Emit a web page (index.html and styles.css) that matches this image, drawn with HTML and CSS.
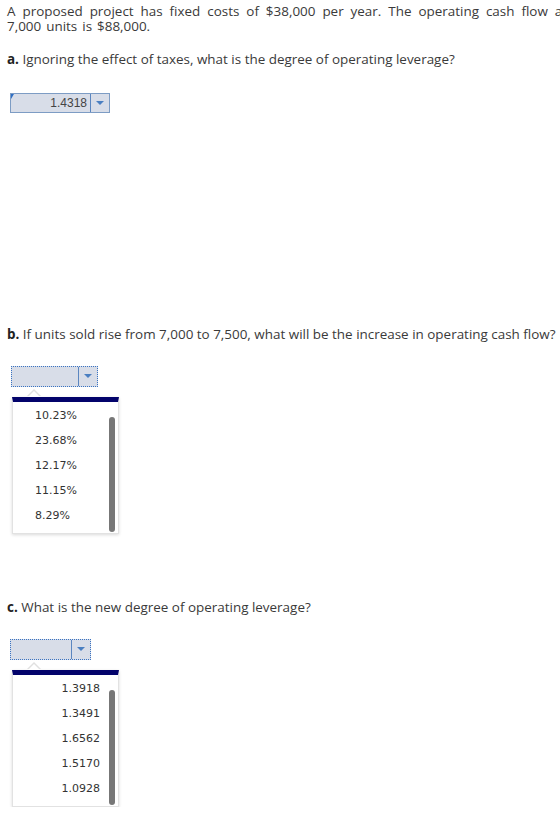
FILE: index.html
```html
<!DOCTYPE html>
<html lang="en">
<head>
    <meta charset="UTF-8">
    <meta name="viewport" content="width=device-width, initial-scale=1.0">
    <title>Operating Leverage</title>
    <link rel="stylesheet" href="styles.css">
</head>
<body>
    <div class="question">
        <p class="intro">A proposed project has fixed costs of $38,000 per year. The operating cash flow at 7,000 units is $88,000.</p>

        <div class="part part-a">
            <p class="prompt"><b>a.</b> Ignoring the effect of taxes, what is the degree of operating leverage?</p>
            <div class="select select-filled">
                <span class="corner"></span>
                <span class="value">1.4318</span>
                <span class="arrow"></span>
            </div>
        </div>

        <div class="part part-b">
            <p class="prompt"><b>b.</b> If units sold rise from 7,000 to 7,500, what will be the increase in operating cash flow?</p>
            <div class="select select-open select-b">
                <span class="value"></span>
                <span class="arrow"></span>
            </div>
            <ul class="menu">
                <li>10.23%</li>
                <li>23.68%</li>
                <li>12.17%</li>
                <li>11.15%</li>
                <li>8.29%</li>
            </ul>
        </div>

        <div class="part part-c">
            <p class="prompt"><b>c.</b> What is the new degree of operating leverage?</p>
            <div class="select select-open select-c">
                <span class="value"></span>
                <span class="arrow"></span>
            </div>
            <ul class="menu menu-right">
                <li>1.3918</li>
                <li>1.3491</li>
                <li>1.6562</li>
                <li>1.5170</li>
                <li>1.0928</li>
            </ul>
        </div>
    </div>
</body>
</html>
```

FILE: styles.css
```css
html, body { overflow: hidden; }
body { margin: 0; padding: 4px 0 0 7px; font-family: "Open Sans", "Liberation Sans", sans-serif; font-size: 13.45px; color: #3a3a3a; background: white; }
.question { width: 566px; }
p { margin: 0; line-height: 15px; }
.intro { width: 560px; text-align: justify; word-spacing: 1.5px; }
b { font-weight: bold; color: #222; }

.part-a { margin-top: 18px; }
.part-a .select { margin-top: 26px; margin-left: 3px; width: 100px; }
.part-b { margin-top: 214px; }
.part-b .select { margin-top: 24px; margin-left: 4px; width: 87px; }
.part-c { margin-top: 66px; }
.part-c .select { margin-top: 24px; margin-left: 3px; width: 81px; }

/* answer dropdown */
.select { position: relative; display: flex; height: 20px; box-sizing: border-box; background: #d8dde8; border: 1px solid #7d9cc4; }
.select-open { height: 21px; border: 1px dotted #3a73c2; }
.select .value { flex: 1; text-align: right; padding-right: 3px; line-height: 18px; font-family: "Liberation Sans", Arial, sans-serif; font-size: 12px; color: #444; border-right: 1px solid #5b86c0; }
.select .arrow { width: 18px; position: relative; }
.select .arrow::after { content: ""; position: absolute; left: 5px; top: 7px; border-left: 4px solid transparent; border-right: 4px solid transparent; border-top: 4px solid #4a7fc1; }
.select .corner { position: absolute; left: 0; top: 0; border-top: 5px solid #2f6fc4; border-right: 3px solid transparent; }

/* open list */
.menu { position: relative; list-style: none; margin: 10px 0 0 5px; padding: 1px 0 0; width: 107px; height: 137px; box-sizing: border-box; background: white; border: 1px solid #e2e2e2; border-top: 5px solid #03036b; box-shadow: 0 1px 3px rgba(0,0,0,0.15); font-family: "DejaVu Sans", Verdana, sans-serif; font-size: 11px; color: #333; }
.menu li { height: 25px; line-height: 25px; padding-left: 22px; }
.menu-right li { text-align: right; padding: 0 18px 0 0; }

/* pointer above the list */
.menu::before { content: ""; position: absolute; left: 14px; top: -13px; border-left: 7px solid transparent; border-right: 7px solid transparent; border-bottom: 7px solid #e0e0e0; }
.menu::after { content: ""; position: absolute; left: 15px; top: -11px; border-left: 6px solid transparent; border-right: 6px solid transparent; border-bottom: 6px solid white; z-index: 1; }

/* scrollbar thumb */
.menu li:first-child::after { content: ""; position: absolute; right: 3px; top: 15px; width: 6px; bottom: 1px; background: #777; border-radius: 3px; }
```
